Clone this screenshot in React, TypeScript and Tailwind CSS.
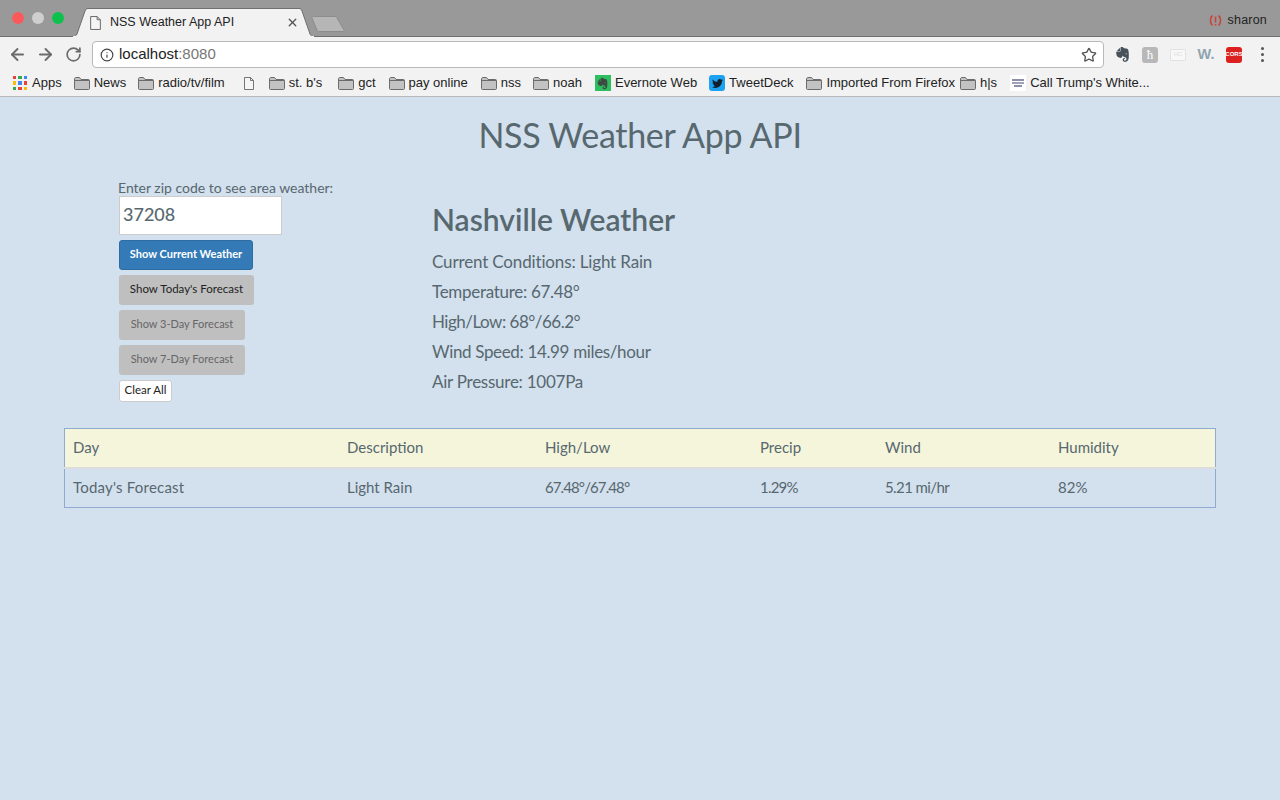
import { ArrowLeft, ArrowRight, RotateCw, Info, Star, X } from "lucide-react";
import { FaEvernote, FaTwitter } from "react-icons/fa";

const bookmarks = [
  { kind: "folder", label: "News", gap: "mr-[12px]" },
  { kind: "folder", label: "radio/tv/film", gap: "mr-[16px]" },
  { kind: "file", label: "", gap: "mr-[12px]" },
  { kind: "folder", label: "st. b's", gap: "mr-[16px]" },
  { kind: "folder", label: "gct", gap: "mr-[13px]" },
  { kind: "folder", label: "pay online", gap: "mr-[13px]" },
  { kind: "folder", label: "nss", gap: "mr-[12px]" },
  { kind: "folder", label: "noah", gap: "mr-[13px]" },
  { kind: "evernote", label: "Evernote Web", gap: "mr-[12px]" },
  { kind: "twitter", label: "TweetDeck", gap: "mr-[13px]" },
  { kind: "folder", label: "Imported From Firefox", gap: "mr-[5px]" },
  { kind: "folder", label: "h|s", gap: "mr-[13px]" },
  { kind: "white", label: "Call Trump's White...", gap: "" },
];

const columns = [
  { w: "w-[274px]", head: "Day", cell: "Today's Forecast", fit: "tracking-[0.200px]" },
  { w: "w-[198px]", head: "Description", cell: "Light Rain", fit: "" },
  { w: "w-[215px]", head: "High/Low", cell: "67.48°/67.48°", fit: "tracking-[-0.900px]" },
  { w: "w-[125px]", head: "Precip", cell: "1.29%", fit: "tracking-[-0.800px]" },
  { w: "w-[173px]", head: "Wind", cell: "5.21 mi/hr", fit: "tracking-[-0.600px]" },
  { w: "flex-1", head: "Humidity", cell: "82%", fit: "" },
];

const conditions = [
  { text: "Current Conditions: Light Rain", fit: "tracking-[-0.150px]" },
  { text: "Temperature: 67.48°", fit: "tracking-[-0.300px]" },
  { text: "High/Low: 68°/66.2°", fit: "tracking-[-0.500px]" },
  { text: "Wind Speed: 14.99 miles/hour", fit: "tracking-[-0.350px]" },
  { text: "Air Pressure: 1007Pa", fit: "tracking-[-0.250px]" },
];

const appColors = ["#ea4335", "#34a853", "#4285f4", "#fbbc05", "#4285f4", "#ea4335", "#34a853", "#ea4335", "#fbbc05"];

function FolderIcon() {
  return (
    <svg width="16" height="13" viewBox="0 0 16 13">
      <path d="M.5 2C.5 1.200 1 .5 2 .5h3.500L7 2.500h7.500c.6 0 1 .4 1 1V11.500c0 .6-.4 1-1 1h-13c-.6 0-1-.4-1-1z" fill="#c2c2c2" stroke="#6b6b6b" />
      <path d="M1 3.500h14" stroke="#6b6b6b" />
    </svg>
  );
}

function FileIcon({ w, h }: { w: number; h: number }) {
  return (
    <svg width={w} height={h} viewBox="0 0 10 13">
      <path d="M.5.5h6l3 3v9h-9z M6.500.5v3h3" fill="#f5f5f5" stroke="#666" strokeWidth="0.9" />
    </svg>
  );
}

function BookmarkIcon({ kind }: { kind: string }) {
  if (kind === "folder") return <FolderIcon />;
  if (kind === "file") return <span className="flex w-[16px] justify-center"><FileIcon w={10} h={13} /></span>;
  if (kind === "evernote")
    return (
      <span className="flex h-4 w-4 items-center justify-center bg-[#2dbe60]">
        <FaEvernote size={13} className="text-[#3d4a42]" />
      </span>
    );
  if (kind === "twitter")
    return (
      <span className="flex h-4 w-4 items-center justify-center rounded-[3px] bg-[#1da1f2]">
        <FaTwitter size={11} className="text-[#10212e]" />
      </span>
    );
  return (
    <span className="flex h-4 w-4 flex-col items-center justify-center gap-px bg-white">
      <span className="h-[2px] w-3 bg-[#8d90a8]" />
      <span className="h-[2px] w-3 bg-[#a0a3b8]" />
      <span className="h-[2px] w-2 bg-[#8d90a8]" />
    </span>
  );
}

function Tab() {
  return (
    <div className="relative flex h-[29px] w-[243px] items-center pl-[18px] pr-[16px] text-[12.500px] text-[#222]">
      <svg className="absolute inset-0" width="243" height="29" viewBox="0 0 243 29">
        <path d="M0 29c3 0 4-1 5-3L13 3c.6-1.500 1.500-2.500 3-2.500h211c1.500 0 2.400 1 3 2.500l8 23c1 2 2 3 5 3z" fill="#f2f2f2" stroke="#6f6f6f" />
        <path d="M1 29h241" stroke="#f2f2f2" strokeWidth="2" />
      </svg>
      <span className="relative flex flex-1 items-center">
        <FileIcon w={11} h={14} />
        <span className="ml-[9px] flex-1">NSS Weather App API</span>
        <X size={13} strokeWidth={2.500} className="text-[#555]" />
      </span>
    </div>
  );
}

function Browser() {
  return (
    <div className="h-[97px] border-b border-[#b9b9b9] bg-[#f2f2f2] font-['Liberation_Sans',sans-serif]">
      <div className="flex h-[37px] items-end border-b border-[#6f6f6f] bg-[#999] pl-[12px]">
        <div className="mb-[12px] flex w-[60px] gap-[8px]">
          <span className="h-3 w-3 rounded-full bg-[#fb5a5a]" />
          <span className="h-3 w-3 rounded-full bg-[#cfcfcf]" />
          <span className="h-3 w-3 rounded-full bg-[#0cc24c]" />
        </div>
        <div className="-mb-px">
          <Tab />
        </div>
        <svg className="mb-[4px] ml-[-4px]" width="34" height="16" viewBox="0 0 34 16">
          <path d="M1 2c0-1 .5-1.500 1.500-1.500H24c1 0 1.500.5 2 1.500l7 12c.4.8 0 1.500-1 1.500H8c-1 0-1.500-.5-2-1.500z" fill="#b6b6b6" stroke="#8d8d8d" />
        </svg>
        <div className="mb-[6px] ml-auto mr-[13px] flex items-center gap-[6px] text-[12.500px] tracking-[0.2px] text-[#222]">
          <svg width="13" height="14" viewBox="0 0 13 14" fill="none" stroke="#c9453a" strokeWidth="1.600">
            <path d="M3.500 1.500C.8 3.500.8 9 3.500 11.500M9.500 1.500c2.700 2 2.700 7.500 0 10" />
            <path d="M6.500 2.500v6M6.500 10v1.500" />
          </svg>
          sharon
        </div>
      </div>
      <div className="flex h-[35px] items-center pl-[8px]">
        <ArrowLeft size={19} strokeWidth={2.400} className="text-[#6b6b6b]" />
        <ArrowRight size={19} strokeWidth={2.400} className="ml-[9px] text-[#6b6b6b]" />
        <RotateCw size={17} strokeWidth={2.400} className="ml-[10px] text-[#6b6b6b]" />
        <div className="ml-[10px] flex h-[27px] w-[1012px] items-center rounded-[4px] border border-[#b9b9b9] bg-white pl-[7px] pr-[6px] text-[15px]">
          <Info size={14} className="text-[#444]" />
          <span className="ml-[5px] text-[#222]">localhost</span>
          <span className="text-[#777]">:8080</span>
          <Star size={16} className="ml-auto text-[#555]" />
        </div>
        <div className="ml-[4px] flex items-center">
          <span className="flex w-[28px] justify-center">
            <FaEvernote size={17} className="text-[#47525a]" />
          </span>
          <span className="flex w-[28px] justify-center">
            <span className="flex h-4 w-4 items-center justify-center rounded-[3px] bg-[#b8b8b8] font-['Liberation_Serif',serif] text-[13px] text-white">ħ</span>
          </span>
          <span className="flex w-[28px] justify-center">
            <span className="flex h-3 w-4 items-center justify-center rounded-[1px] border border-[#e2e2e2] bg-[#f8f8f8] text-[6px] text-[#ddd]">HC</span>
          </span>
          <span className="flex w-[28px] justify-center text-[14.500px] font-bold text-[#90a4ae]">W.</span>
          <span className="flex w-[28px] justify-center">
            <span className="flex h-4 w-4 items-center justify-center rounded-[3px] bg-[#dc2020] text-[6px] font-bold text-white">CORS</span>
          </span>
          <span className="flex w-[28px] justify-center">
            <span className="flex w-[3px] flex-col gap-[3px]">
              <span className="h-[3px] w-[3px] rounded-full bg-[#555]" />
              <span className="h-[3px] w-[3px] rounded-full bg-[#555]" />
              <span className="h-[3px] w-[3px] rounded-full bg-[#555]" />
            </span>
          </span>
        </div>
      </div>
      <div className="flex h-[24px] items-center pb-[2px] pl-[13px] text-[13px] text-[#222]">
        <span className="mr-[12px] flex items-center gap-[5px]">
          <span className="grid h-[14px] w-[14px] grid-cols-3 gap-[2px]">
            {appColors.map((c, i) => (
              <span key={i} style={{ backgroundColor: c }} />
            ))}
          </span>
          Apps
        </span>
        {bookmarks.map((b, i) => (
          <span key={i} className={`${b.gap} flex items-center gap-[4px] whitespace-nowrap`}>
            <BookmarkIcon kind={b.kind} />
            {b.label}
          </span>
        ))}
      </div>
    </div>
  );
}

export default function App() {
  return (
    <div className="flex h-[800px] flex-col overflow-hidden bg-[#d3e0ee]">
      <Browser />
      <div className="flex-1 px-[64px] font-['Lato',sans-serif] text-[#57686f]">
        <h1 className="mt-[17px] text-center text-[34px] leading-[42px] tracking-[-0.300px]">NSS Weather App API</h1>
        <div className="mt-[24px] flex pl-[55px]">
          <div className="w-[313px]">
            <div className="-ml-px text-[14px] leading-[16px]">Enter zip code to see area weather:</div>
            <div className="flex h-[39px] w-[163px] items-center border border-[#ccc] bg-white pb-[3px] pl-[3px] text-[18px] font-medium">37208</div>
            <div className="mt-[5px] flex flex-col items-start gap-[5px] text-[11px]">
              <button className="h-[30px] w-[134px] rounded-[3px] border border-[#2e6da4] bg-[#337ab7] pb-[2px] font-bold text-white">Show Current Weather</button>
              <button className="h-[30px] w-[135px] rounded-[3px] bg-[#bfbfbf] pb-[2px] text-[11.500px] text-[#222]">Show Today's Forecast</button>
              <button className="h-[30px] w-[126px] rounded-[3px] bg-[#bfbfbf] pb-[2px] text-[#666]">Show 3-Day Forecast</button>
              <button className="h-[30px] w-[126px] rounded-[3px] bg-[#bfbfbf] pb-[2px] text-[#666]">Show 7-Day Forecast</button>
              <button className="h-[22px] w-[53px] rounded-[3px] border border-[#ccc] bg-white pb-[2px] text-[11.500px] text-[#222]">Clear All</button>
            </div>
          </div>
          <div className="pt-[19px] text-[17px] leading-[30px]">
            <h2 className="mb-[8px] text-[30px] font-semibold leading-[40px]">Nashville Weather</h2>
            {conditions.map((c) => (
              <div key={c.text} className={c.fit}>{c.text}</div>
            ))}
          </div>
        </div>
        <div className="mt-[26px] border border-[#8fabd0] text-[15px]">
          <div className="flex h-[38px] items-center bg-[#f5f5dc] pb-[2px] pl-[8px]">
            {columns.map((c) => (
              <div key={c.head} className={c.w}>{c.head}</div>
            ))}
          </div>
          <div className="-mx-px h-[2px] bg-[#dddddd]" />
          <div className="flex h-[38px] items-center pb-[2px] pl-[8px]">
            {columns.map((c) => (
              <div key={c.head} className={`${c.w} ${c.fit}`}>{c.cell}</div>
            ))}
          </div>
        </div>
      </div>
    </div>
  );
}
